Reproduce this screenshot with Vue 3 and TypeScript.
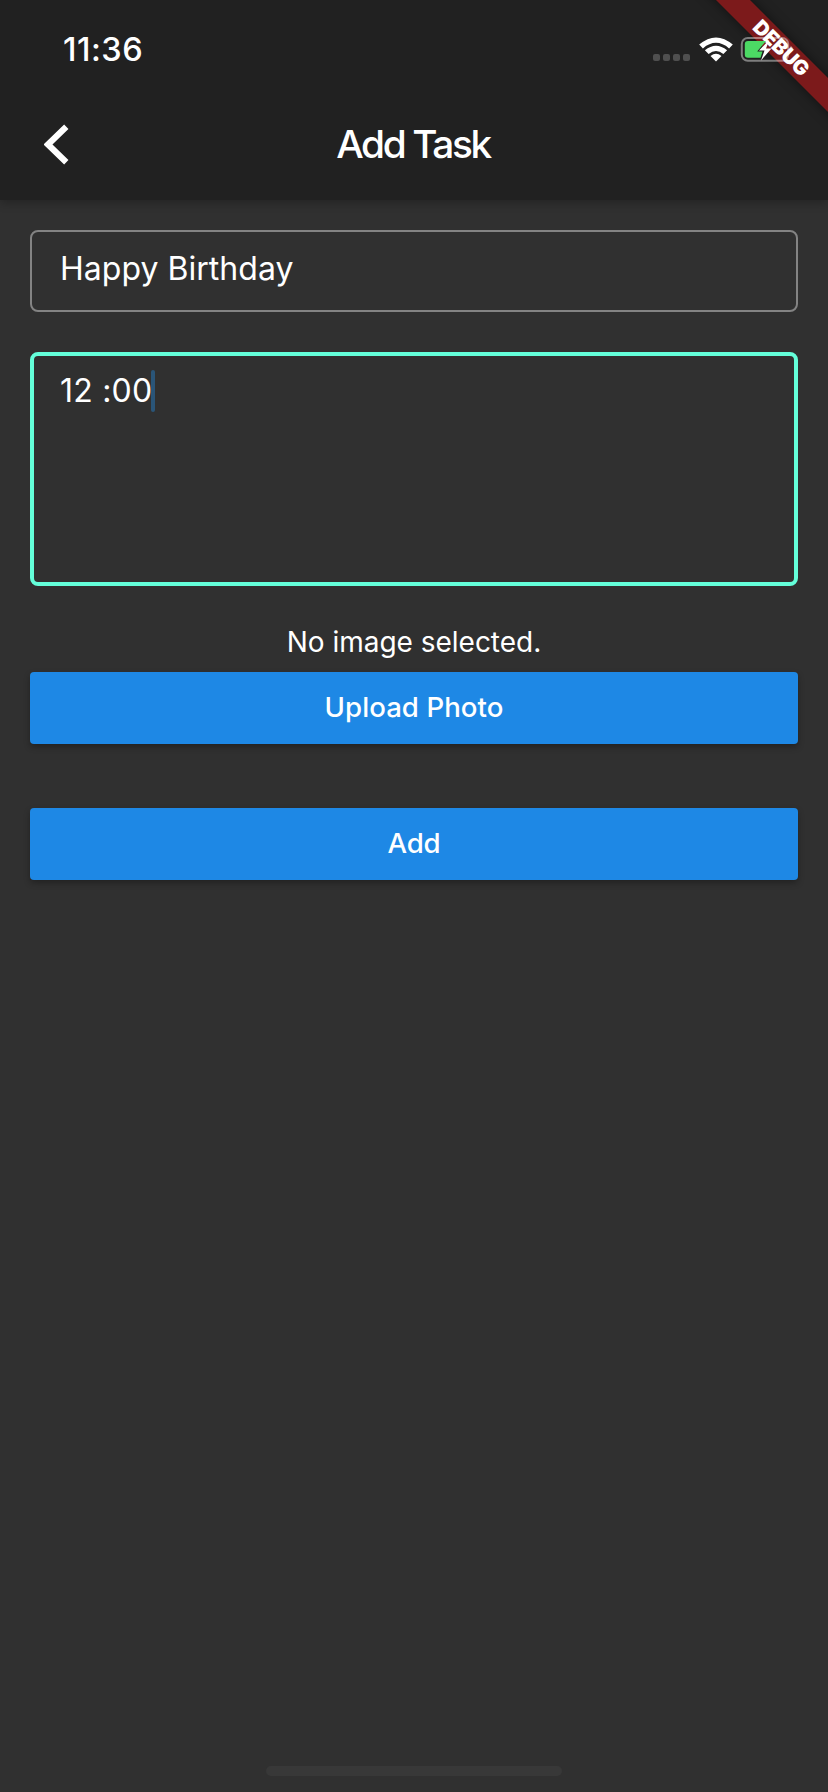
<script setup lang="ts">
import { ref } from 'vue'

const title = ref('Happy Birthday')
const details = ref('12 :00')
const signalDots = [0, 1, 2, 3]
</script>

<template>
  <main class="screen">
    <header class="app-bar">
      <div class="status">
        <span class="clock">11:36</span>
        <div class="dots"><i v-for="d in signalDots" :key="d"></i></div>
        <svg class="wifi" viewBox="0 0 34 25" width="34" height="25">
          <path fill="#fff" d="M0.2 7.6Q17-6.8 33.8 7.6L30.1 11.4Q17 .3 3.9 11.4Z" />
          <path fill="#fff" d="M5.9 13.3Q17 4.2 28.1 13.3L24.4 17Q17 11 9.6 17Z" />
          <path fill="#fff" d="M11.5 18.9Q17 14.6 22.5 18.9L17 24.5Z" />
        </svg>
        <svg class="battery" viewBox="0 0 54 28" width="54" height="28">
          <rect x="1.8" y="2" width="46.4" height="22.8" rx="6" fill="none" stroke="#fff" stroke-opacity=".42" stroke-width="2" />
          <path d="M50.5 9.5Q53 11 53 13.3Q53 15.6 50.5 17Z" fill="#fff" fill-opacity=".42" />
          <path d="M8 5H26L17.2 15.4H22.5L20.5 21.8H8Q4.8 21.8 4.8 18.6V8.2Q4.8 5 8 5Z" fill="#4cd964" />
          <path d="M29.5 3.5L19 14.6H24.5L21 24.5L31.5 12.5H26Z" fill="#fff" />
        </svg>
      </div>
      <div class="toolbar">
        <svg class="back" viewBox="0 0 26 42" width="26" height="42">
          <path d="M22.3 2.8L4 20.5L22.3 38.2" fill="none" stroke="#fff" stroke-width="6.2" />
        </svg>
        <h1>Add Task</h1>
      </div>
    </header>

    <form class="content" @submit.prevent>
      <div class="field single"><span class="t-title">{{ title }}</span></div>
      <div class="field multi"><span class="t-details">{{ details }}</span><i class="caret"></i></div>
      <p class="hint">No image selected.</p>
      <button type="button" class="btn upload">Upload Photo</button>
      <button type="submit" class="btn add">Add</button>
    </form>

    <div class="banner"><span>DEBUG</span></div>
    <div class="home"></div>
  </main>
</template>

<style>
body {
  background: #303030;
}
</style>

<style scoped>
.screen {
  position: relative;
  width: 828px;
  height: 1792px;
  overflow: hidden;
  background: #303030;
  color: #fff;
  font-family: Inter, "Liberation Sans", sans-serif;
}
.app-bar {
  height: 200px;
  background: #212121;
  box-shadow: 0 2px 10px rgba(0, 0, 0, 0.3);
}
.status {
  position: relative;
  z-index: 3;
  display: flex;
  height: 88px;
  padding-left: 63px;
}
.clock {
  width: 590px;
  margin-top: 30px;
  font-size: 32.5px;
  line-height: 40px;
  font-weight: 550;
  letter-spacing: 0.5px;
}
.dots {
  display: flex;
  gap: 3px;
  margin-top: 54px;
}
.dots i {
  width: 7px;
  height: 7px;
  border-radius: 2px;
  background: #4f4f4f;
}
.wifi {
  margin: 37px 0 0 9px;
}
.battery {
  margin: 36px 0 0 7px;
}
.toolbar {
  display: grid;
  grid-template-columns: 88px 1fr 88px;
  height: 112px;
}
.back {
  margin: 35.5px 0 0 43.5px;
}
h1 {
  margin: 0;
  padding-top: 32px;
  text-align: center;
  font-size: 38.8px;
  line-height: 48px;
  font-weight: 530;
  letter-spacing: -2.4px;
  text-indent: -2px;
}
.content {
  display: flex;
  flex-direction: column;
  padding: 30px 30px 0;
}
.field {
  display: flex;
  box-sizing: border-box;
  font-size: 32px;
  line-height: 40px;
  letter-spacing: 0.03px;
  border-radius: 8px;
}
.single {
  height: 82px;
  border: 2px solid #838383;
  padding: 17px 28px;
}
.multi {
  height: 234px;
  margin-top: 40px;
  border: 4px solid #64ffda;
  padding: 15px 26px;
}
.t-details {
  letter-spacing: 0.2px;
}
.caret {
  width: 4px;
  height: 42px;
  margin: -1px 0 0 -1.5px;
  border-radius: 2px;
  background: #2a5578;
}
.hint {
  margin: 0;
  height: 86px;
  padding-top: 39px;
  box-sizing: border-box;
  text-align: center;
  font-size: 28px;
  line-height: 34px;
  letter-spacing: -0.02px;
}
.btn {
  height: 72px;
  box-sizing: border-box;
  padding: 0 0 2px;
  border: 0;
  border-radius: 4px;
  background: #1e88e5;
  color: #fff;
  font: 530 27.6px/34px Inter, "Liberation Sans", sans-serif;
  letter-spacing: 0.05px;
  box-shadow: 0 3px 6px rgba(0, 0, 0, 0.3);
}
.add {
  margin-top: 64px;
  letter-spacing: -0.2px;
}
.banner {
  position: absolute;
  z-index: 2;
  left: 660.5px;
  top: 35.5px;
  width: 240px;
  height: 24px;
  transform: rotate(45deg);
  background: #7c1a1b;
  box-shadow: 0 0 12px rgba(0, 0, 0, 0.5);
  text-align: center;
  font-size: 20.4px;
  line-height: 24px;
  font-weight: 900;
  letter-spacing: -0.3px;
}
.home {
  position: absolute;
  left: 266px;
  top: 1766px;
  width: 296px;
  height: 10px;
  border-radius: 5px;
  background: #383838;
}
</style>
